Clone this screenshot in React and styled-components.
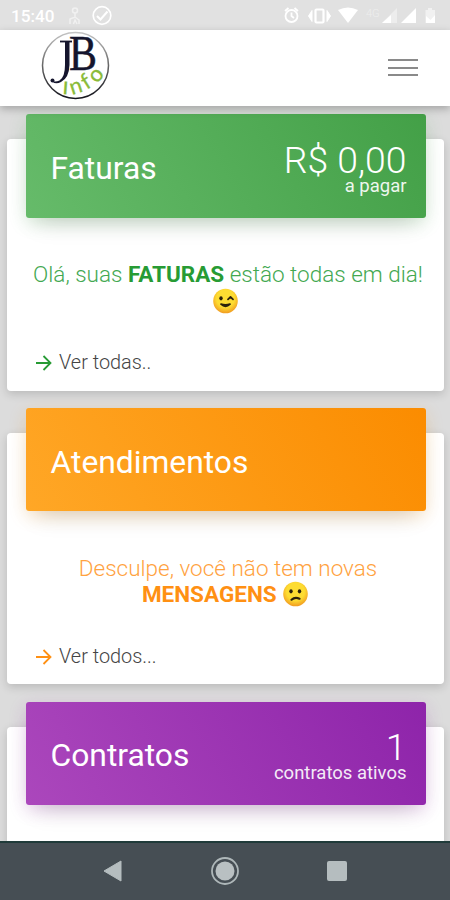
import styled, { createGlobalStyle } from "styled-components";

const GlobalStyle = createGlobalStyle`
  * {
    box-sizing: border-box;
  }

  body {
    margin: 0;
    font-family: Roboto, "Liberation Sans", sans-serif;
    font-weight: 300;
    overflow: hidden;
  }

  h2, p {
    margin: 0;
  }

  svg {
    display: block;
  }
`;

const cards = [
  {
    title: "Faturas",
    from: "#66bb6a",
    to: "#43a047",
    glow: "rgba(76, 175, 80, 0.2)",
    accent: "#279b34",
    soft: "#43a851",
    value: "R$ 0,00",
    caption: "a pagar",
    before: "Olá, suas ",
    strong: "FATURAS",
    after: " estão todas em dia!",
    face: "wink",
    link: "Ver todas..",
  },
  {
    title: "Atendimentos",
    from: "#ffa726",
    to: "#fb8c00",
    glow: "rgba(255, 152, 0, 0.2)",
    accent: "#ff9013",
    soft: "#ffa240",
    before: "Desculpe, você não tem novas ",
    strong: "MENSAGENS",
    after: "",
    face: "sad",
    link: "Ver todos...",
  },
  {
    title: "Contratos",
    from: "#ab47bc",
    to: "#8e24aa",
    glow: "rgba(156, 39, 176, 0.2)",
    value: "1",
    caption: "contratos ativos",
  },
];

const Logo = () => (
  <svg width="70" height="70" viewBox="0 0 70 70" overflow="visible">
    <defs>
      <linearGradient id="ring" x1="0" y1="0" x2="0" y2="1">
        <stop offset="0" stopColor="#c4c4c4" />
        <stop offset="0.5" stopColor="#666" />
        <stop offset="1" stopColor="#15151d" />
      </linearGradient>
    </defs>
    <circle cx="34.5" cy="34.5" r="33" fill="#fff" stroke="url(#ring)" strokeWidth="1.5" />
    {/* the J hangs below the B */}
    <path d="M19 10.5H31" fill="none" stroke="#15152d" strokeWidth="1.8" />
    <path
      d="M24 10.5H28.5V34Q28 47 20 51Q14 54 10 49.5Q14 51.5 18.5 49.5Q24 46 24 34Z"
      fill="#15152d"
    />
    <circle cx="11.5" cy="49.5" r="2" fill="#15152d" />
    <text
      x="28"
      y="39"
      fontFamily="Liberation Serif"
      fontSize="50"
      fill="#15152d"
      stroke="#15152d"
      strokeWidth="0.5"
      textLength="28"
      lengthAdjust="spacingAndGlyphs"
    >
      B
    </text>
    <g fontFamily="Lato" fontSize="22" fontWeight="400" fill="#8abb38" stroke="#8abb38" strokeWidth="0.3">
      <text transform="translate(21 63) rotate(4) scale(1 0.8)">I</text>
      <text transform="translate(31 64) rotate(-18)">n</text>
      <text transform="translate(45.5 59) rotate(-32)">f</text>
      <text transform="translate(56 53) rotate(-50)">o</text>
    </g>
  </svg>
);

const StatusIcons = () => (
  <svg width="150" height="30" viewBox="0 0 150 30" fill="none" stroke="#fff" strokeWidth="1.8">
    <circle cx="5.5" cy="16" r="6" />
    <path d="M5.5 12.5V16L8 18M-1 11L2.5 8M8.5 8L12 11" />
    <rect x="29.5" y="9.5" width="8" height="13" rx="1" strokeWidth="2.2" />
    <path d="M26 10.5V21.5L22.5 16ZM41 10.5V21.5L44.5 16Z" fill="#fff" strokeWidth="1" />
    <path d="M52 10Q62 5 72 10L62 23Z" fill="#fff" stroke="none" />
    <path d="M111 8V23H96Z" fill="#ededed" stroke="none" />
    <path d="M105 15V23H96Z" fill="#fff" stroke="none" />
    <path d="M130 8V23H115Z" fill="#fff" stroke="none" />
    <path d="M142 8H146V10H149V23H139.5V10H142Z" fill="#f1f1f1" stroke="none" />
    <path d="M140 23V16L144.5 20L149 15V23Z" fill="#fff" stroke="none" />
    <text x="80" y="17" fill="#eee" stroke="none" fontFamily="Roboto" fontSize="11">
      4G
    </text>
  </svg>
);

const Face = ({ type }) => (
  <FaceIcon viewBox="0 0 26 26">
    <defs>
      <radialGradient id={type} cx="0.5" cy="0.4" r="0.6">
        <stop offset="0.6" stopColor="#fddc32" />
        <stop offset="1" stopColor="#f19b20" />
      </radialGradient>
    </defs>
    <circle cx="13" cy="13" r="12.3" fill={`url(#${type})`} />
    <ellipse cx="8.5" cy="10.3" rx="1.7" ry="2.1" fill="#2c210c" />
    {type === "wink" ? (
      <g stroke="#2c210c" strokeWidth="1.8" strokeLinecap="round" strokeLinejoin="round">
        <path d="M15.5 11.3L18 9L20.5 11.3" fill="none" />
        <path d="M8.5 16.2Q13 17.5 17.5 16.2Q13 20.5 8.500 16.2Z" fill="#2c210c" />
      </g>
    ) : (
      <g>
        <ellipse cx="17" cy="10.3" rx="1.7" ry="2.1" fill="#2c210c" />
        <path
          d="M9 18.7Q12.5 15.5 17 17.7"
          fill="none"
          stroke="#2c210c"
          strokeWidth="2.2"
          strokeLinecap="round"
        />
      </g>
    )}
  </FaceIcon>
);

const Card = ({ card }) => (
  <CardBox>
    <CardHeader $from={card.from} $to={card.to} $glow={card.glow}>
      <CardTitle>{card.title}</CardTitle>
      {card.value && (
        <Summary>
          <Value>{card.value}</Value>
          <Caption>{card.caption}</Caption>
        </Summary>
      )}
    </CardHeader>
    {card.link && (
      <>
        <Message $color={card.soft} $strong={card.accent}>
          {card.before}
          <strong>{card.strong}</strong>
          {card.after} <Face type={card.face} />
        </Message>
        <CardLink>
          <svg width="18" height="18" viewBox="0 0 18 18" fill="none" stroke={card.accent} strokeWidth="1.8">
            <path d="M1 9H15.5M8.5 2L15.5 9L8.5 16" />
          </svg>
          {card.link}
        </CardLink>
      </>
    )}
  </CardBox>
);

const App = () => {
  return (
    <Screen>
      <GlobalStyle />
      <StatusBar>
        <Clock>15:40</Clock>
        <svg width="46" height="30" viewBox="0 0 46 30" fill="none" stroke="#fff">
          <g stroke="#f1f1f1" strokeWidth="1.5">
            <circle cx="9" cy="10.5" r="2.5" />
            <path d="M9 13V17M4 24V19L9 17L13 20V24M7.5 24L9 20L11 24" />
          </g>
          <circle cx="36" cy="15.5" r="8.8" strokeWidth="1.7" />
          <path d="M31 16L34.5 19.5L41.5 11.5" strokeWidth="2" />
        </svg>
        <StatusRight>
          <StatusIcons />
        </StatusRight>
      </StatusBar>
      <Navbar>
        <Logo />
        <Menu>
          <span />
          <span />
          <span />
        </Menu>
      </Navbar>
      <Content>
        {cards.map((card) => (
          <Card key={card.title} card={card} />
        ))}
      </Content>
      <SystemBar>
        <svg width="20" height="22" viewBox="0 0 20 22">
          <path d="M1 11L18 1V21Z" fill="#b5bdbf" stroke="#b5bdbf" />
        </svg>
        <svg width="30" height="30" viewBox="0 0 30 30">
          <circle cx="15" cy="15" r="13" fill="none" stroke="#aeb7b9" strokeWidth="1.8" />
          <circle cx="15" cy="15" r="9.5" fill="#b9c0c2" />
        </svg>
        <Recent />
      </SystemBar>
    </Screen>
  );
};

const Screen = styled.div`
  width: 450px;
  height: 900px;
  display: flex;
  flex-direction: column;
  overflow: hidden;
  background: #dcdcdc;
`;

const StatusBar = styled.div`
  height: 30px;
  flex: none;
  display: flex;
  align-items: center;
  padding: 0 14px 0 11px;
  background: #e1e1e1;
`;

const Clock = styled.span`
  width: 55px;
  font-size: 17.2px;
  font-weight: 500;
  line-height: 34px;
  padding-top: 1px;
  color: #fff;
`;

const StatusRight = styled.div`
  margin-left: auto;

  svg {
    overflow: visible;
  }
`;

const Navbar = styled.header`
  height: 75.5px;
  flex: none;
  display: flex;
  align-items: flex-start;
  justify-content: space-between;
  padding: 1px 32px 0 41px;
  background: #fff;
  box-shadow: 0 3px 8px rgba(0, 0, 0, 0.25);
  z-index: 1;
`;

const Menu = styled.div`
  width: 30px;
  display: flex;
  flex-direction: column;
  gap: 5.5px;
  margin-top: 28px;

  span {
    height: 2px;
    background: #8a8a8a;
  }
`;

const Content = styled.main`
  flex: 1;
  min-height: 0;
  overflow: hidden;
  padding: 33.5px 6px 0 6.5px;
`;

const CardBox = styled.section`
  height: 251.5px;
  margin-bottom: 42.3px;
  padding: 0 18.5px 0 19px;
  border-radius: 4px;
  background: #fff;
  box-shadow: 0 3px 10px rgba(0, 0, 0, 0.16);
`;

const CardHeader = styled.div`
  position: relative;
  top: -25px;
  height: 103.5px;
  display: flex;
  align-items: center;
  justify-content: space-between;
  padding: 6px 19px 0 25px;
  border-radius: 3px;
  color: #fff;
  background: linear-gradient(60deg, ${({ $from }) => $from}, ${({ $to }) => $to});
  box-shadow: 0 13px 24px -11px rgba(0, 0, 0, 0.18), 0 5px 18px ${({ $glow }) => $glow};
`;

const CardTitle = styled.h2`
  padding-bottom: 2px;
  font-size: 31.8px;
  font-weight: 400;
  line-height: 40px;
`;

const Summary = styled.div`
  text-align: right;
`;

const Value = styled.p`
  font-size: 37.3px;
  line-height: 34px;
`;

const Caption = styled.p`
  font-size: 18.5px;
  font-weight: 400;
  line-height: 18px;
  opacity: 0.9;
`;

const Message = styled.p`
  height: 77px;
  margin: 18.5px -8px 0;
  text-align: center;
  text-indent: 5px;
  font-size: 22.5px;
  line-height: 26.5px;
  padding: 0 8px;
  color: ${({ $color }) => $color};

  strong {
    font-weight: 700;
    color: ${({ $strong }) => $strong};
  }
`;

const FaceIcon = styled.svg`
  display: inline-block;
  width: 27px;
  height: 26px;
  vertical-align: -5px;
`;

const CardLink = styled.div`
  display: flex;
  align-items: center;
  gap: 6.5px;
  margin: 13px 0 0 9px;
  font-size: 19.9px;
  line-height: 24px;
  color: #444;
`;

const SystemBar = styled.footer`
  height: 59px;
  flex: none;
  display: grid;
  grid-template-columns: 112px 112px 112px;
  align-items: center;
  justify-content: center;
  justify-items: center;
  padding-bottom: 2px;
  border-top: 2px solid #203b3a;
  background: #464e54;
  z-index: 1;
`;

const Recent = styled.span`
  width: 20px;
  height: 20px;
  border-radius: 2px;
  background: #b5bdbf;
`;

export default App;
